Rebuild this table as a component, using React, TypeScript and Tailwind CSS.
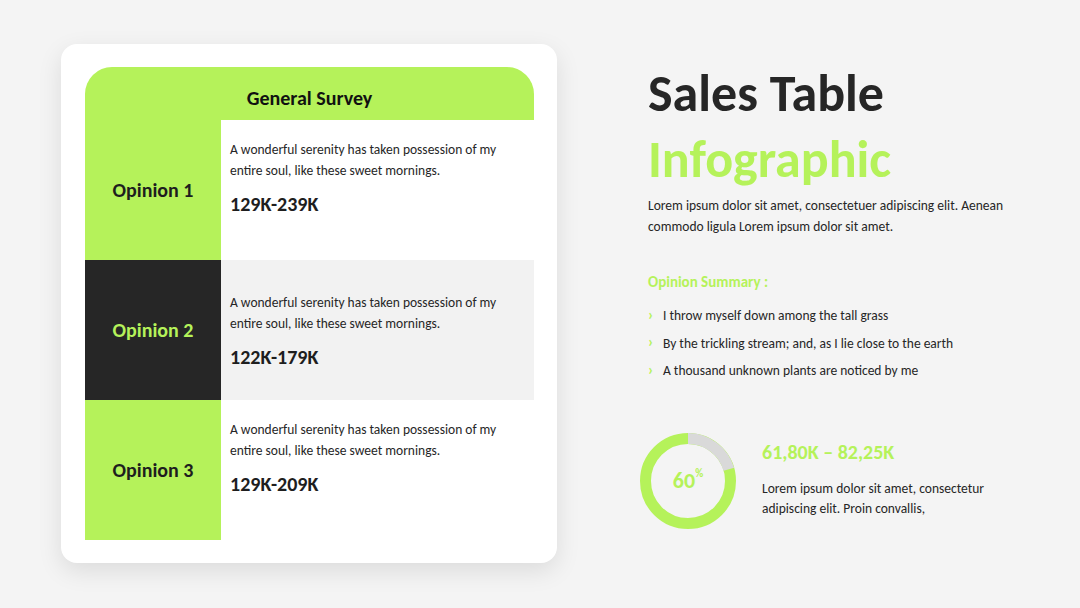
import React from 'react'

const rows = [
  { label: 'Opinion 1', value: '129K-239K', dark: false },
  { label: 'Opinion 2', value: '122K-179K', dark: true },
  { label: 'Opinion 3', value: '129K-209K', dark: false },
]

const bullets = [
  'I throw myself down among the tall grass',
  'By the trickling stream; and, as I lie close to the earth',
  'A thousand unknown plants are noticed by me',
]

function Donut() {
  const r = 42.5
  const c = 2 * Math.PI * r
  const gray = 0.205
  return (
    <div className="relative w-[96px] h-[96px] shrink-0">
      <svg width="96" height="96" viewBox="0 0 96 96" className="-rotate-90">
        <circle cx="48" cy="48" r={r} fill="none" stroke="#b5f25a" strokeWidth="11" />
        <circle
          cx="48" cy="48" r={r} fill="none" stroke="#d9d9d9" strokeWidth="11"
          strokeDasharray={`${c * gray} ${c}`}
        />
      </svg>
      <div className="absolute inset-0 flex items-center justify-center">
        <span className="text-[22px] font-bold text-[#b5f25a] leading-none flex items-start">
          60<span className="text-[11px] leading-none -mt-[2px]">%</span>
        </span>
      </div>
    </div>
  )
}

export default function App() {
  return (
    <div
      className="w-[1080px] h-[608px] bg-[#f4f4f4] flex overflow-hidden text-[#262626]"
      style={{ fontFamily: 'Carlito, Lato, "Liberation Sans", sans-serif' }}
    >
      <div className="ml-[61px] mt-[44px] w-[496px] h-[519px] bg-white rounded-[16px] shadow-[0_8px_24px_rgba(0,0,0,0.10)] pl-[24px] pr-[23px] pt-[23px]">
        <div className="h-[53px] bg-[#b5f25a] rounded-t-[27px] flex items-center justify-center pt-[8px]">
          <span className="text-[20px] font-bold text-[#111]">General Survey</span>
        </div>
        {rows.map((row, i) => (
          <div key={i} className="flex h-[140px]">
            <div className={`w-[136px] flex items-center justify-center ${row.dark ? 'bg-[#262626]' : 'bg-[#b5f25a]'}`}>
              <span className={`text-[20px] font-bold ${row.dark ? 'text-[#b5f25a]' : 'text-[#1e1e1e]'}`}>{row.label}</span>
            </div>
            <div className={`flex-1 pl-[9px] ${row.dark ? 'bg-[#f2f2f2] pt-[32px]' : 'bg-white pt-[19px]'}`}>
              <p className="text-[13.5px] leading-[21px] text-[#262626]">
                A wonderful serenity has taken possession of my<br />entire soul, like these sweet mornings.
              </p>
              <p className="mt-[11px] text-[20px] font-bold text-[#1e1e1e] leading-[24px]">{row.value}</p>
            </div>
          </div>
        ))}
      </div>

      <div className="ml-[91px] mt-[66px] flex flex-col">
        <h1 className="text-[52px] font-bold leading-[56px] text-[#262626] -mt-[1px]">Sales Table</h1>
        <h2 className="text-[52px] font-bold leading-[56px] text-[#b5f25a] mt-[10px]">Infographic</h2>
        <p className="mt-[8px] text-[13.5px] leading-[21px] text-[#262626]">
          Lorem ipsum dolor sit amet, consectetuer adipiscing elit. Aenean<br />commodo ligula Lorem ipsum dolor sit amet.
        </p>
        <p className="mt-[35px] text-[15px] font-bold text-[#b5f25a] leading-[20px]">Opinion Summary :</p>
        <ul className="mt-[14px] flex flex-col gap-[7.5px]">
          {bullets.map((b) => (
            <li key={b} className="flex items-center text-[13.5px] leading-[20px]">
              <span className="w-[15px] text-[#b5f25a] font-bold text-[15px] leading-none -mt-[2px]">›</span>
              <span>{b}</span>
            </li>
          ))}
        </ul>
        <div className="mt-[52px] flex items-start -ml-[8px]">
          <Donut />
          <div className="ml-[26px] pt-[7px]">
            <p className="text-[20px] font-bold text-[#b5f25a] leading-[24px]">61,80K – 82,25K</p>
            <p className="mt-[15px] text-[13.5px] leading-[20px] text-[#262626]">
              Lorem ipsum dolor sit amet, consectetur<br />adipiscing elit. Proin convallis,
            </p>
          </div>
        </div>
      </div>
    </div>
  )
}
